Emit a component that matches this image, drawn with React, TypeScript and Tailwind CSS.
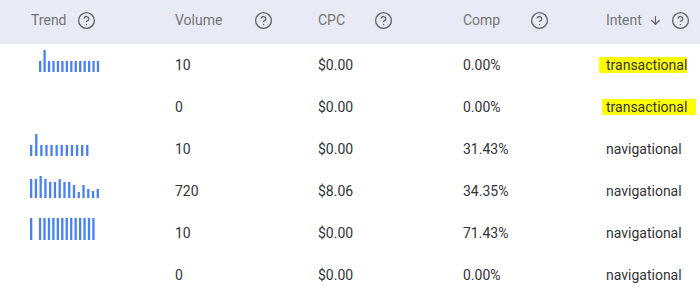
import { CircleHelp, ArrowDown } from 'lucide-react';

type Spark = { x: number; pitch: number; bars: number[] };

const rows: {
  spark: Spark | null;
  volume: string;
  cpc: string;
  comp: string;
  intent: string;
  mark?: 'a' | 'b';
}[] = [
  { spark: { x: 39, pitch: 4.45, bars: [11, 22, 11, 11, 11, 11, 11, 11, 11, 11, 11, 11, 11, 11] }, volume: '10', cpc: '$0.00', comp: '0.00%', intent: 'transactional', mark: 'a' },
  { spark: null, volume: '0', cpc: '$0.00', comp: '0.00%', intent: 'transactional', mark: 'b' },
  { spark: { x: 30, pitch: 5.1, bars: [11, 22, 11, 11, 11, 11, 11, 11, 11, 11, 11, 11] }, volume: '10', cpc: '$0.00', comp: '31.43%', intent: 'navigational' },
  { spark: { x: 30, pitch: 4.76, bars: [19, 19, 22, 19, 16, 16, 19, 16, 16, 13, 6, 13, 9, 7, 9] }, volume: '720', cpc: '$8.06', comp: '34.35%', intent: 'navigational' },
  { spark: { x: 30, pitch: 4.45, bars: [22, 0, 22, 22, 22, 22, 22, 22, 22, 22, 22, 22, 22, 22, 22] }, volume: '10', cpc: '$0.00', comp: '71.43%', intent: 'navigational' },
  { spark: null, volume: '0', cpc: '$0.00', comp: '0.00%', intent: 'navigational' },
];

function Sparkline({ s }: { s: Spark }) {
  return (
    <svg width="100" height="22" viewBox="0 0 100 22" className="block">
      {s.bars.map((h, i) =>
        h > 0 ? <rect key={i} x={s.x - 28 + i * s.pitch} y={22 - h} width="2.3" height={h} fill="#4a80f5" /> : null
      )}
    </svg>
  );
}

function Help() {
  return <CircleHelp size={19} strokeWidth={1.7} className="text-[#5f6368] shrink-0" />;
}

export default function App() {
  return (
    <div className="w-[700px] h-[301px] bg-white text-[14px] overflow-hidden" style={{ fontFamily: 'Roboto, "Liberation Sans", sans-serif' }}>
      {/* Header */}
      <div className="flex h-[44px] items-center pb-[4px] bg-[#e8eaf6] text-[#757575]">
        <div className="w-[175px] pl-[31px] flex items-center">
          <span>Trend</span>
          <span className="ml-[10px]"><Help /></span>
        </div>
        <div className="w-[143px] flex items-center">
          <span>Volume</span>
          <span className="ml-[32px]"><Help /></span>
        </div>
        <div className="w-[145px] flex items-center">
          <span>CPC</span>
          <span className="ml-[29px]"><Help /></span>
        </div>
        <div className="w-[143px] flex items-center">
          <span>Comp</span>
          <span className="ml-[30px]"><Help /></span>
        </div>
        <div className="flex-1 flex items-center">
          <span>Intent</span>
          <ArrowDown size={13} strokeWidth={2.2} className="ml-[7px] text-[#5f6368]" />
          <span className="ml-[9px]"><Help /></span>
        </div>
      </div>

      {/* Rows */}
      {rows.map((r, i) => (
        <div key={i} className="flex h-[42px] items-center text-[#333333]">
          <div className="w-[175px] pl-[28px] h-full flex items-center pb-[8px]">
            {r.spark && <Sparkline s={r.spark} />}
          </div>
          <div className="w-[143px]">{r.volume}</div>
          <div className="w-[145px]">{r.cpc}</div>
          <div className="w-[143px]">{r.comp}</div>
          <div className="flex-1">
            {r.mark === 'a' && <span className="bg-[#ffff00] ml-[-7px] pl-[7px]">{r.intent}</span>}
            {r.mark === 'b' && <span className="bg-[#ffff00] ml-[-4px] pl-[4px] pr-[9px]">{r.intent}</span>}
            {!r.mark && <span>{r.intent}</span>}
          </div>
        </div>
      ))}
    </div>
  );
}
